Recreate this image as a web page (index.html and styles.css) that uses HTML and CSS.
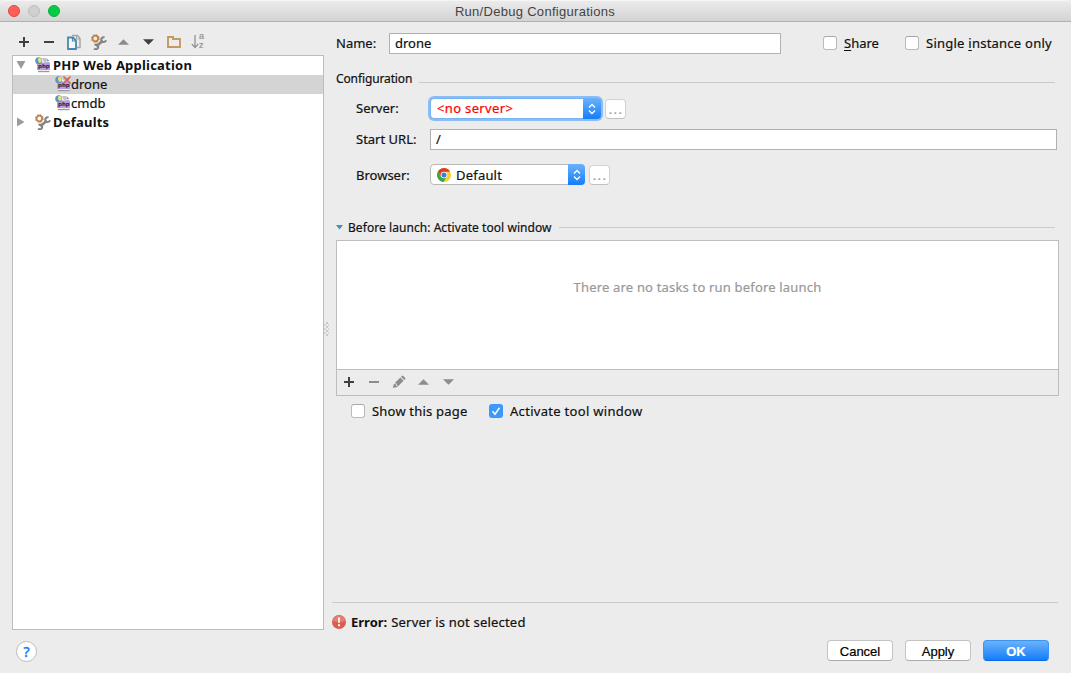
FILE: index.html
```html
<!DOCTYPE html>
<html>
<head>
    <meta charset="UTF-8">
    <title>Run/Debug Configurations</title>
    <link rel="stylesheet" href="styles.css">
</head>
<body>
    <!-- shared icons -->
    <svg class="sprite">
        <symbol id="plus" viewBox="0 0 12 12"><path d="M5 1h2v4h4v2H7v4H5V7H1V5h4z"/></symbol>
        <symbol id="minus" viewBox="0 0 12 12"><path d="M1 5h10v2H1z"/></symbol>
        <symbol id="up" viewBox="0 0 12 6"><path d="M6 0l6 6H0z"/></symbol>
        <symbol id="down" viewBox="0 0 12 6"><path d="M0 0h12L6 6z"/></symbol>
        <symbol id="tools" viewBox="0 0 16 16">
            <circle cx="4.300" cy="4.500" r="2.800" fill="none" stroke="#bd8049" stroke-width="1.800"/>
            <circle cx="4.300" cy="4.500" r="3.900" fill="none" stroke="#bd8049" stroke-width="1" stroke-dasharray="1.600 1.460"/>
            <path d="M5.300 12.200l6.500-5.500" stroke="#858585" stroke-width="2.700"/>
            <path d="M13.600 3.400a2.400 2.400 0 1 0 1.400 2.800M3.600 11.200a2.200 2.200 0 1 1-.4 3.300" fill="none" stroke="#858585" stroke-width="2.100"/>
        </symbol>
        <symbol id="php" viewBox="0 0 16 16">
            <path d="M3 1h8l3 3.500V14H3z" fill="#fff"/>
            <path d="M7 1h4v3.500h3V6h-3.500L8 4z" fill="#c4c4c4"/>
            <path d="M11.500 1l3 3h-3z" fill="#999"/>
            <path d="M3 14.500h11.500" stroke="#9a9a9a" stroke-width="1.400"/>
            <rect x="2" y="5.500" width="13" height="7.500" fill="#ae9ff2"/>
            <circle cx="3.700" cy="3.700" r="3.500" fill="#5799bf"/>
            <path d="M3.200 1.200q3-1 3.500 1.500T4.800 6Q2.500 4.500 3.200 1.200z" fill="#f2df76"/>
            <text x="3" y="10.900" class="php-text">php</text>
        </symbol>
        <symbol id="arrows" viewBox="0 0 8 12"><path d="M1 4.500L4 1.500l3 3M1 7.500l3 3 3-3" fill="none" stroke="#fff" stroke-width="1.400"/></symbol>
    </svg>

    <div class="window">
        <div class="titlebar">
            <span class="light close"></span>
            <span class="light minimize"></span>
            <span class="light zoom"></span>
            <div class="title">Run/Debug Configurations</div>
        </div>

        <div class="main">
            <div class="sidebar">
                <div class="toolbar">
                    <svg class="icon dark"><use href="#plus"/></svg>
                    <svg class="icon dark"><use href="#minus"/></svg>
                    <svg class="icon16" viewBox="0 0 16 16" fill="none">
                        <path d="M6 1.500h5.500l2.500 3v9h-3" stroke="#a5a5a5" stroke-width="1.500"/>
                        <path d="M10.500 1v4H14" stroke="#a5a5a5"/>
                        <path d="M2 3.500h5l3 3V15H2z" stroke="#4c87ad" stroke-width="1.800" fill="#f4f8fa"/>
                        <path d="M6.500 3.500V7H10" stroke="#4c87ad" stroke-width="1.200"/>
                    </svg>
                    <svg class="icon16"><use href="#tools"/></svg>
                    <svg class="tri gray"><use href="#up"/></svg>
                    <svg class="tri dark"><use href="#down"/></svg>
                    <svg class="icon16" viewBox="0 0 16 16"><path d="M2 3h5v2h7v8H2z" fill="none" stroke="#c49a60" stroke-width="1.900"/></svg>
                    <div class="sort">
                        <svg class="sort-arrow" viewBox="0 0 8 16"><path d="M4 1v12M.8 10L4 13.500 7.200 10" fill="none" stroke="#939393" stroke-width="1.300"/></svg>
                        <div class="sort-letters"><div>a</div><div>z</div></div>
                    </div>
                </div>
                <div class="tree">
                    <div class="tree-row">
                        <svg class="toggle" viewBox="0 0 10 10"><path d="M.5 1h9L5 9z"/></svg>
                        <svg class="icon16"><use href="#php"/></svg>
                        <b>PHP Web Application</b>
                    </div>
                    <div class="tree-row child selected">
                        <svg class="icon16" viewBox="0 0 16 16">
                            <use href="#php"/>
                            <path d="M8.500 .5l7 7M15.500 .5l-7 7" stroke="#d95b52" stroke-width="1.500"/>
                        </svg>
                        <span>drone</span>
                    </div>
                    <div class="tree-row child">
                        <svg class="icon16"><use href="#php"/></svg>
                        <span>cmdb</span>
                    </div>
                    <div class="tree-row">
                        <svg class="toggle" viewBox="0 0 10 10"><path d="M1 .5v9L8.500 5z"/></svg>
                        <svg class="icon16"><use href="#tools"/></svg>
                        <b>Defaults</b>
                    </div>
                </div>
            </div>

            <div class="splitter"><span class="grip"></span></div>

            <div class="settings">
                <div class="name-row">
                    <label class="name-label">Name:</label>
                    <div class="field name-field">drone</div>
                    <span class="checkbox"></span>
                    <label class="share"><u>S</u>hare</label>
                    <span class="checkbox"></span>
                    <label class="single">Single <u>i</u>nstance only</label>
                </div>

                <div class="section-title">
                    <span class="config-label">Configuration</span>
                    <span class="rule low"></span>
                </div>

                <div class="form-row">
                    <label>Server:</label>
                    <div class="combo focused">
                        <span class="value error-text">&lt;no server&gt;</span>
                        <span class="combo-button"><svg><use href="#arrows"/></svg></span>
                    </div>
                    <div class="more">...</div>
                </div>
                <div class="form-row url-row">
                    <label>Start URL:</label>
                    <div class="field">/</div>
                </div>
                <div class="form-row browser-row">
                    <label>Browser:</label>
                    <div class="combo browser">
                        <svg class="chrome" viewBox="0 0 14 14">
                            <circle cx="7" cy="7" r="7" fill="#f8cf2c"/>
                            <path d="M.94 3.500A7 7 0 0 1 13.060 3.500L7 4 4.200 8.500z" fill="#dc3b2c"/>
                            <path d="M.94 3.500A7 7 0 0 0 6.600 14L9.800 8.600 4.200 8.500z" fill="#3da650"/>
                            <circle cx="7" cy="7" r="3.300" fill="#fff"/>
                            <circle cx="7" cy="7" r="2.500" fill="#3c7ed0"/>
                        </svg>
                        <span class="value">Default</span>
                        <span class="combo-button"><svg><use href="#arrows"/></svg></span>
                    </div>
                    <div class="more">...</div>
                </div>

                <div class="section-title launch-title">
                    <svg class="fold" viewBox="0 0 7 5"><path d="M0 0h7L3.500 4.500z" fill="#3b93c4"/></svg>
                    <span class="launch-label">Before launch: Activate tool window</span>
                    <span class="rule"></span>
                </div>
                <div class="tasks">
                    <div class="tasks-list"><span>There are no tasks to run before launch</span></div>
                    <div class="tasks-toolbar">
                        <svg class="icon dark"><use href="#plus"/></svg>
                        <svg class="icon gray"><use href="#minus"/></svg>
                        <svg class="pencil gray" viewBox="0 0 14 14"><path d="M1 13l.8-4 2 .3.500 1.800 1.900.5L5.300 12zM2.600 8.200L8.300 2.500l3.200 3.200-5.100 5.200-1.400-.5-.5-1.900zM9 1.800l.8-.9q.7-.6 1.400 0l1.900 1.900q.6.700 0 1.400l-.9.800z"/></svg>
                        <svg class="tri gray"><use href="#up"/></svg>
                        <svg class="tri gray"><use href="#down"/></svg>
                    </div>
                </div>
                <div class="options">
                    <span class="checkbox"></span>
                    <label class="show-page">Show this page</label>
                    <span class="checkbox checked"><svg viewBox="0 0 14 14"><path d="M3.500 7.200l2.500 3L10.500 3.700" fill="none" stroke="#fff" stroke-width="1.500"/></svg></span>
                    <label class="activate">Activate tool window</label>
                </div>

                <div class="message">
                    <svg class="error-icon" viewBox="0 0 14 14">
                        <circle cx="7" cy="7" r="7" fill="#dc5c51"/>
                        <path d="M1 6a6 5.500 0 0 1 12 0q-6 2-12 0z" fill="#e77d73"/>
                        <path d="M6 2.500h2L7.700 8H6.300zM6 9.300h2v2H6z" fill="#fff"/>
                    </svg>
                    <b>Error:</b>
                    <span>Server is not selected</span>
                </div>
            </div>
        </div>

        <div class="footer">
            <div class="help">?</div>
            <div class="buttons">
                <div class="button">Cancel</div>
                <div class="button">Apply</div>
                <div class="button ok">OK</div>
            </div>
        </div>
    </div>
</body>
</html>
```
FILE: styles.css
```css
body {
    margin: 0;
    font-family: 'Noto Sans', 'Open Sans', sans-serif;
    font-size: 13px;
    line-height: 16px;
    color: #111;
    background-color: #ececec;
    white-space: nowrap;
    -webkit-text-stroke: 0.200px;
}
* {
    box-sizing: border-box;
}
svg {
    display: block;
    flex: none;
}
b {
    -webkit-text-stroke: 0;
}
.sprite {
    display: none;
}
.window {
    display: flex;
    flex-direction: column;
    width: 1071px;
    height: 673px;
    overflow: hidden;
}
.titlebar {
    display: flex;
    align-items: center;
    gap: 8px;
    height: 22px;
    padding: 0 8px;
    border-top: 1px solid #f5f5f5;
    border-bottom: 1px solid #b1b1b1;
    border-radius: 5px 5px 0 0;
    background: linear-gradient(#ebebeb, #d3d3d3);
}
.light {
    flex: none;
    width: 12px;
    height: 12px;
    border-radius: 50%;
    border: 1px solid #e2463f;
    background: #ff5f57;
}
.light.minimize {
    border-color: #bdbdbd;
    background: #d0d0d0;
}
.light.zoom {
    border-color: #10ac37;
    background: #05cc47;
}
.title {
    flex: 1;
    padding: 2px 61px 0 0;
    text-align: center;
    font-family: 'Liberation Sans', Arial, sans-serif;
    letter-spacing: 0.290px;
    color: #444;
    -webkit-text-stroke: 0;
}
.main {
    display: flex;
    height: 608px;
    padding-left: 12px;
}
.sidebar {
    display: flex;
    flex-direction: column;
    width: 312px;
}
.toolbar {
    display: flex;
    align-items: center;
    height: 33px;
    padding: 6px 0 0 6px;
}
.icon {
    width: 12px;
    height: 12px;
    margin-right: 13px;
}
.icon16 {
    width: 16px;
    height: 16px;
}
.toolbar .icon16 {
    margin-right: 9px;
}
.toolbar .icon + .icon16 {
    margin-left: -2px;
}
.tri {
    width: 11px;
    height: 6px;
    margin-right: 14px;
}
.toolbar .tri + .icon16 {
    margin-left: -2px;
}
.toolbar .icon16 + .tri {
    margin-left: 2px;
}
.dark {
    fill: #404040;
}
.gray {
    fill: #8c8c8c;
}
.sort {
    display: flex;
    align-items: center;
}
.sort-arrow {
    width: 8px;
    height: 16px;
}
.sort-letters {
    width: 8px;
    padding-bottom: 1px;
    font: 9px/9px 'Liberation Sans', sans-serif;
    color: #939393;
}
.php-text {
    font: bold 5.500px 'DejaVu Sans', sans-serif;
    fill: #27213e;
    -webkit-text-stroke: 0;
}
.tree {
    flex: 1;
    border: 1px solid #bdbdbd;
    background: #fff;
}
.tree-row {
    display: flex;
    align-items: center;
    height: 19px;
    padding: 0 0 2px 3px;
}
.tree-row.child {
    padding-left: 42px;
}
.tree-row.selected {
    background: #d4d4d4;
}
.toggle {
    width: 10px;
    height: 10px;
    margin-right: 9px;
    fill: #9b9b9b;
}
.tree-row b {
    margin-left: 2px;
    letter-spacing: 0.220px;
}
.splitter {
    display: flex;
    align-items: center;
    width: 8px;
}
.grip {
    width: 5px;
    height: 14px;
    margin-top: 6px;
    background: conic-gradient(#b4b4b4 25%, transparent 0) 0 0 / 4px 4px,
        conic-gradient(#c4c4c4 25%, transparent 0) 2px 2px / 4px 4px;
    opacity: 0.6;
}
.settings {
    display: flex;
    flex-direction: column;
    width: 727px;
    padding: 11px 0 1px 4px;
}
.name-row {
    display: flex;
    align-items: center;
    height: 21px;
}
.name-row label {
    padding-bottom: 1px;
}
.name-row .checkbox {
    margin-bottom: 1px;
}
.name-label {
    width: 53px;
}
.field {
    height: 21px;
    padding: 1px 5px;
    border: 1px solid #b1b1b1;
    background: #fff;
}
.name-field {
    width: 392px;
    margin-right: 42px;
}
.checkbox {
    flex: none;
    width: 14px;
    height: 14px;
    margin-right: 7px;
    border: 1px solid #bababa;
    border-top-color: #a8a8a8;
    border-radius: 3px;
    background: #fff;
}
.checkbox.checked {
    border: none;
    background: #3b99fc;
}
.share {
    width: 61px;
}
.single {
    letter-spacing: 0.240px;
}
u {
    text-underline-offset: 2px;
}
.section-title {
    display: flex;
    align-items: center;
    height: 16px;
    margin-top: 16px;
    font-size: 12px;
}
.config-label,
.launch-label {
    padding-top: 2px;
}
.config-label {
    letter-spacing: -0.120px;
}
.launch-label {
    letter-spacing: 0.060px;
}
.rule {
    flex: 1;
    height: 1px;
    margin: 0 4px 0 7px;
    background: #cbcbcb;
}
.rule.low {
    margin-top: 9px;
}
.form-row {
    display: flex;
    height: 21px;
    margin-top: 12px;
    padding-left: 20px;
}
.form-row label {
    width: 74px;
    padding-top: 2px;
}
.url-row {
    margin-top: 10px;
}
.browser-row {
    margin-top: 14px;
}
.browser-row label {
    padding-top: 3px;
}
.url-row .field {
    width: 627px;
}
.combo {
    display: flex;
    align-items: center;
    width: 171px;
    height: 21px;
    border: 1px solid #b9b9b9;
    border-radius: 4px;
    background: #fff;
}
.combo.focused {
    border-color: #77b3f3;
    box-shadow: 0 0 0 2px #8bbdf3;
}
.combo.browser {
    width: 155px;
}
.value {
    flex: 1;
    padding-left: 6px;
}
.error-text {
    padding-bottom: 2px;
    letter-spacing: 0.350px;
    color: #f00;
}
.combo-button {
    display: flex;
    align-items: center;
    justify-content: center;
    width: 18px;
    height: 21px;
    margin-right: -1px;
    border-radius: 0 4px 4px 0;
    background: linear-gradient(#6bb3fa, #147dfb);
}
.browser .combo-button {
    width: 17px;
}
.combo-button svg {
    width: 8px;
    height: 12px;
}
.chrome {
    width: 14px;
    height: 14px;
    margin-left: 6px;
}
.browser .value {
    padding-left: 5px;
    letter-spacing: 0.200px;
}
.more {
    width: 21px;
    height: 20px;
    margin: 1px 0 0 4px;
    padding-left: 1px;
    border: 1px solid #d3d3d3;
    border-bottom-color: #c0c0c0;
    border-radius: 4px;
    background: #fff;
    color: #999;
    text-align: center;
    line-height: 19px;
    letter-spacing: 1.300px;
}
.launch-title {
    margin-top: 34px;
}
.fold {
    width: 7px;
    height: 5px;
    margin-right: 5px;
}
.tasks {
    height: 156px;
    margin-top: 5px;
    border: 1px solid #bdbdbd;
}
.tasks-list {
    height: 129px;
    padding-top: 38px;
    border-bottom: 1px solid #bdbdbd;
    background: #fff;
    color: #999;
    letter-spacing: 0.180px;
    text-align: center;
}
.tasks-toolbar {
    display: flex;
    align-items: center;
    height: 25px;
    padding: 0 0 2px 6px;
}
.pencil {
    width: 14px;
    height: 14px;
    margin: 0 12px 0 -1px;
}
.options {
    display: flex;
    align-items: center;
    height: 14px;
    margin-top: 8px;
    padding-left: 15px;
}
.show-page {
    width: 117px;
    letter-spacing: 0.200px;
}
.activate {
    letter-spacing: 0.300px;
}
.message {
    display: flex;
    align-items: center;
    height: 27px;
    margin: auto 1px 0 -4px;
    padding-top: 12px;
    border-top: 1px solid #cbcbcb;
}
.message b {
    padding-bottom: 1px;
}
.error-icon {
    width: 14px;
    height: 14px;
    margin-right: 5px;
}
.message span {
    margin-left: 4px;
    padding-bottom: 1px;
    letter-spacing: 0.200px;
}
.footer {
    display: flex;
    justify-content: space-between;
    padding: 10px 22px 0 16px;
}
.help {
    width: 21px;
    height: 21px;
    margin-top: 1px;
    border: 1px solid #bcbcbc;
    border-radius: 50%;
    background: #fff;
    color: #1583fb;
    font-size: 14px;
    line-height: 19px;
    -webkit-text-stroke: 0.500px;
    text-align: center;
}
.buttons {
    display: flex;
    gap: 12px;
}
.button {
    width: 66px;
    height: 21px;
    border: 1px solid #c3c3c3;
    border-bottom-color: #acacac;
    border-radius: 4px;
    background: #fff;
    color: #000;
    font: 13px/21px 'Liberation Sans', sans-serif;
    text-align: center;
}
.button.ok {
    border-color: #3c94f7;
    border-bottom-color: #0968e8;
    background: linear-gradient(#6bb3fa, #147dfb);
    color: #fff;
    font-weight: bold;
}
```
